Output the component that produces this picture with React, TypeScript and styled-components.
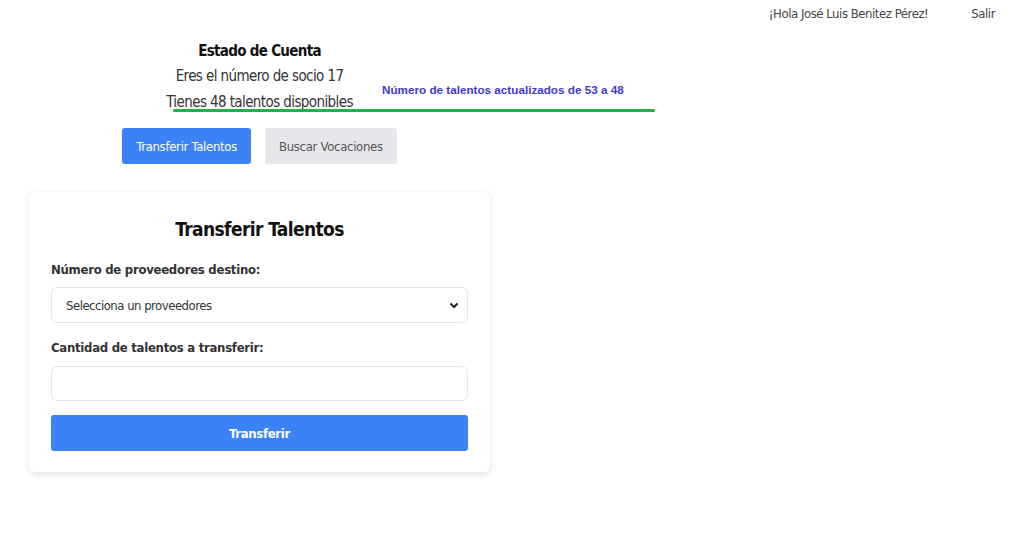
import React from "react";
import styled, { createGlobalStyle } from "styled-components";

const GlobalStyle = createGlobalStyle`
  body {
    margin: 0;
    background: #fff;
    font-family: "DejaVu Sans Condensed", "Open Sans", sans-serif;
    color: #333;
  }
`;

const App = () => {
  return (
    <Page>
      <GlobalStyle />
      <TopBar>
        <TopText>¡Hola José Luis Benitez Pérez!</TopText>
        <TopText>Salir</TopText>
      </TopBar>
      <Main>
        <Header>
          <HeaderTitle>Estado de Cuenta</HeaderTitle>
          <HeaderLine>Eres el número de socio 17</HeaderLine>
          <HeaderLine>Tienes 48 talentos disponibles</HeaderLine>
          <Tabs>
            <TabButton $active>Transferir Talentos</TabButton>
            <TabButton>Buscar Vocaciones</TabButton>
          </Tabs>
        </Header>
        <Card>
          <CardTitle>Transferir Talentos</CardTitle>
          <Label>Número de proveedores destino:</Label>
          <SelectBox>
            <span>Selecciona un proveedores</span>
            <svg width="10" height="7" viewBox="0 0 10 7">
              <path
                d="M1.5 1.5 L5 5 L8.5 1.5"
                fill="none"
                stroke="#222"
                strokeWidth="2"
              />
            </svg>
          </SelectBox>
          <Label $top>Cantidad de talentos a transferir:</Label>
          <TextInput type="text" />
          <SubmitButton>Transferir</SubmitButton>
        </Card>
      </Main>
      <Toast>
        <ToastText>Número de talentos actualizados de 53 a 48</ToastText>
        <ToastBar />
      </Toast>
    </Page>
  );
};

const Page = styled.div`
  position: relative;
  width: 1024px;
  height: 552px;
`;

const TopBar = styled.div`
  display: flex;
  justify-content: flex-end;
  align-items: center;
  gap: 43px;
  height: 26px;
  padding-right: 29px;
`;

const TopText = styled.span`
  font-size: 13px;
  letter-spacing: -0.45px;
  color: #444;
`;

const Main = styled.div`
  width: 461px;
  padding-left: 29px;
`;

const Header = styled.div`
  display: flex;
  flex-direction: column;
  align-items: center;
  padding-top: 13px;
`;

const HeaderTitle = styled.div`
  font-size: 15px;
  font-weight: bold;
  letter-spacing: -0.7px;
  line-height: 25px;
  color: #111;
`;

const HeaderLine = styled.div`
  font-size: 15px;
  letter-spacing: -0.6px;
  line-height: 25.5px;
  color: #333;
`;

const Tabs = styled.div`
  display: flex;
  gap: 14px;
  margin-top: 13px;
`;

const TabButton = styled.button<{ $active?: boolean }>`
  height: 36px;
  padding: 0 14px;
  border: none;
  border-radius: 3px;
  font-family: inherit;
  font-size: 13px;
  letter-spacing: -0.3px;
  background: ${(p) => (p.$active ? "#3b82f6" : "#e5e7eb")};
  color: ${(p) => (p.$active ? "#fff" : "#555")};
`;

const Card = styled.div`
  margin-top: 28px;
  padding: 22px 22px 21px;
  border-radius: 6px;
  background: #fff;
  box-shadow: 0 2px 7px rgba(0, 0, 0, 0.12);
  display: flex;
  flex-direction: column;
`;

const CardTitle = styled.div`
  font-size: 19px;
  font-weight: bold;
  letter-spacing: -0.6px;
  line-height: 30px;
  text-align: center;
  color: #111;
`;

const Label = styled.div<{ $top?: boolean }>`
  margin-top: ${(p) => (p.$top ? "15px" : "16px")};
  margin-bottom: ${(p) => (p.$top ? "8px" : "7px")};
  font-size: 13px;
  font-weight: bold;
  letter-spacing: -0.27px;
  line-height: 20px;
  color: #333;
`;

const SelectBox = styled.div`
  height: 36px;
  box-sizing: border-box;
  border: 1px solid #e5e7eb;
  border-radius: 6px;
  display: flex;
  align-items: center;
  justify-content: space-between;
  padding: 0 8px 0 14px;
  font-size: 13px;
  letter-spacing: -0.5px;
  color: #333;
`;

const TextInput = styled.input`
  height: 35px;
  box-sizing: border-box;
  border: 1px solid #e5e7eb;
  border-radius: 6px;
  outline: none;
`;

const SubmitButton = styled.button`
  margin-top: 14px;
  height: 36px;
  border: none;
  border-radius: 3px;
  background: #3b82f6;
  color: #fff;
  font-family: inherit;
  font-size: 13px;
  font-weight: bold;
  letter-spacing: -0.3px;
`;

const Toast = styled.div`
  position: absolute;
  left: 173px;
  top: 80px;
  width: 482px;
`;

const ToastText = styled.div`
  padding-left: 209px;
  font-family: "Liberation Sans", Arial, sans-serif;
  font-size: 11.7px;
  font-weight: bold;
  line-height: 20px;
  color: #4338ca;
`;

const ToastBar = styled.div`
  margin-top: 9px;
  height: 3px;
  border-radius: 2px;
  background: #22b04b;
`;

export default App;
